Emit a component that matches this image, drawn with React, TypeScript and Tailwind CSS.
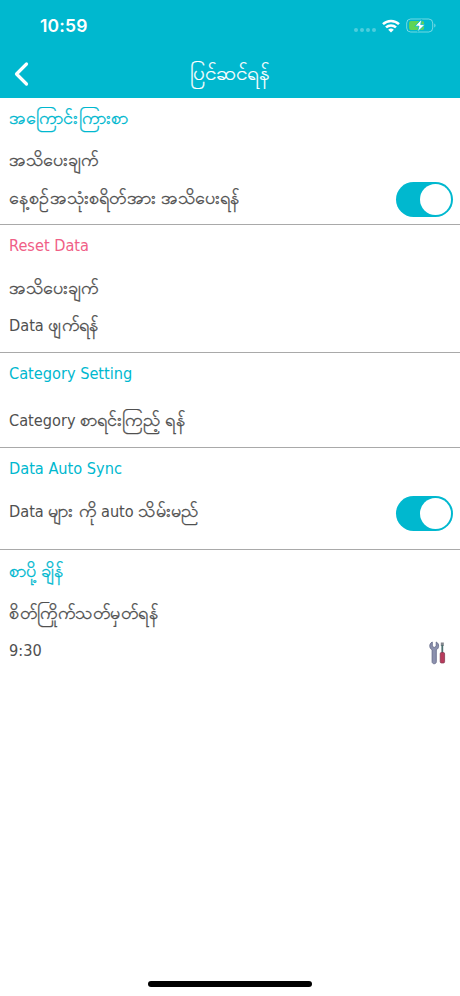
import { ReactNode } from "react";

type SectionProps = {
	title: ReactNode;
	titleClass?: string;
	className?: string;
	children: ReactNode;
};

function Section({ title, titleClass = "text-[#00b8cf]", className = "", children }: SectionProps) {
	return (
		<section className={`pl-[9px] pr-[7px] ${className}`}>
			<h2 className={`flex items-center h-10 ${titleClass}`}>{title}</h2>
			{children}
		</section>
	);
}

function Latin({ children }: { children: ReactNode }) {
	return <span className="text-[16.2px] tracking-normal font-['DejaVu_Sans_Condensed','DejaVu_Sans',sans-serif] [font-stretch:75%] [-webkit-text-stroke:0]">{children}</span>;
}

function Toggle() {
	return (
		<button role="switch" aria-checked="true" className="flex items-center justify-end w-[57px] h-[35px] mt-[2px] p-[2px] rounded-full bg-[#00b8cf]">
			<span className="w-[31px] h-[31px] bg-white rounded-full" />
		</button>
	);
}

function StatusBar() {
	return (
		<div className="flex items-center justify-between h-[51px] pl-10 pr-6">
			<span className="text-[17.5px] font-semibold tracking-[0.2px] font-['Inter',sans-serif] [-webkit-text-stroke:0]">10:59</span>
			<div className="flex items-center">
				<div className="flex gap-[2px] mt-2 mr-[6px]">
					<span className="w-[4px] h-[4px] rounded-full bg-white/30" />
					<span className="w-[4px] h-[4px] rounded-full bg-white/30" />
					<span className="w-[4px] h-[4px] rounded-full bg-white/30" />
					<span className="w-[4px] h-[4px] rounded-full bg-white/30" />
				</div>
				<svg width="18" height="14" viewBox="0 0 18 14" fill="none" stroke="white" strokeWidth="2.5">
					<path d="M1 5.2a11.4 11.4 0 0 1 16 0" />
					<path d="M4 8.4a7.2 7.2 0 0 1 10 0" />
					<path d="M9 13.6 6.2 10.8a4 4 0 0 1 5.6 0Z" fill="white" stroke="none" />
				</svg>
				<svg className="ml-[6px]" width="30" height="15" viewBox="0 0 30 15" fill="none">
					<rect x=".7" y="1" width="26" height="13" rx="4" stroke="white" strokeOpacity=".45" />
					<rect x="3" y="3" width="15" height="9" rx="2" fill="#5fd455" />
					<path d="M28.3 5.5v4c1.6-.7 1.6-3.3 0-4Z" fill="white" fillOpacity=".5" />
					<path d="M15.8 1 9 8.2h4L11.4 14 19 6.6h-4.3Z" fill="white" stroke="#00b8cf" strokeWidth=".8" />
				</svg>
			</div>
		</div>
	);
}

function ToolsIcon() {
	return (
		<svg className="mt-[3px]" width="18" height="24" viewBox="0 0 18 24" fill="none">
			<path
				d="M3.3 1C1.5 1.8.6 3.5.8 5.4c.2 1.7 1.1 2.7 2.3 3.4v12c0 2.6 4.2 2.6 4.2 0v-12C8.6 8.1 9.4 7.1 9.6 5.4 9.8 3.5 8.9 1.8 7.2 1v4.3L5.2 6.5 3.3 5.3Z"
				fill="#8c91ae"
				stroke="#5f6484"
				strokeWidth=".8"
			/>
			<path d="M11.8 1.5h3V5h-3Z" fill="#85878e" />
			<path d="M13.3 4v9" stroke="#4d6f70" strokeWidth="1.8" />
			<rect x="11.2" y="11.5" width="4.4" height="10.5" rx="1.3" fill="#b83b5c" stroke="#7d3049" strokeWidth=".7" />
		</svg>
	);
}

export default function App() {
	return (
		<div className="flex flex-col h-[996px] overflow-hidden bg-white text-[18px] leading-none text-[#505050] font-['Open_Sans',sans-serif] [-webkit-text-stroke:0.35px]">
			<header className="h-[98px] text-white bg-[#00b8cf] [-webkit-text-stroke:0.2px]">
				<StatusBar />
				<div className="grid items-center grid-cols-3 h-[46px]">
					<svg className="ml-[13px]" width="17" height="26" viewBox="0 0 17 26" fill="none" stroke="white" strokeWidth="3.2" strokeLinecap="round" strokeLinejoin="round">
						<path d="M13.5 3 3.5 13l10 10" />
					</svg>
					<h1 className="pb-1 text-center text-[20.7px] whitespace-nowrap">ပြင်ဆင်ရန်</h1>
				</div>
			</header>
			<main className="flex-1">
				<Section title="အကြောင်းကြားစာ" titleClass="pb-[2px] tracking-[0.2px] text-[#00b8cf]" className="h-[127px] border-b border-[#a9a9a9]">
					<p className="flex items-center pb-[2px] h-11">အသိပေးချက်</p>
					<div className="flex items-center justify-between h-8">
						<p className="pb-[2px] tracking-[0.2px]">နေ့စဉ်အသုံးစရိတ်အား အသိပေးရန်</p>
						<Toggle />
					</div>
				</Section>
				<Section title={<Latin>Reset Data</Latin>} titleClass="pt-[2px] text-[#f05f87]" className="h-[128px] border-b border-[#a9a9a9]">
					<p className="flex items-center h-11">အသိပေးချက်</p>
					<p className="flex items-center h-8 tracking-[0.2px]"><span><Latin>Data </Latin>ဖျက်ရန်</span></p>
				</Section>
				<Section title={<Latin>Category Setting</Latin>} titleClass="pt-[2px] text-[#00b8cf]" className="h-[95px] border-b border-[#a9a9a9]">
					<p className="flex items-center h-[54px] tracking-[0.1px]"><span><Latin>Category </Latin>စာရင်းကြည့် ရန်</span></p>
				</Section>
				<Section title={<Latin>Data Auto Sync</Latin>} titleClass="pt-[2px] text-[#00b8cf]" className="h-[102px] border-b border-[#a9a9a9]">
					<div className="flex items-center justify-between h-12">
						<p className="pb-[2px] tracking-[0.3px]"><Latin>Data </Latin>များ ကို <Latin>auto </Latin>သိမ်းမည်</p>
						<Toggle />
					</div>
				</Section>
				<Section title="စာပို့ ချိန်" titleClass="tracking-[0.2px] text-[#00b8cf]">
					<p className="flex items-center tracking-[0.5px] h-11">စိတ်ကြိုက်သတ်မှတ်ရန်</p>
					<div className="flex items-center justify-between h-8 pt-[2px] pr-[6px]">
						<Latin>9:30</Latin>
						<ToolsIcon />
					</div>
				</Section>
			</main>
			<footer className="flex justify-center pb-[9px]">
				<div className="w-[164px] h-[6px] bg-black rounded-full" />
			</footer>
		</div>
	);
}
